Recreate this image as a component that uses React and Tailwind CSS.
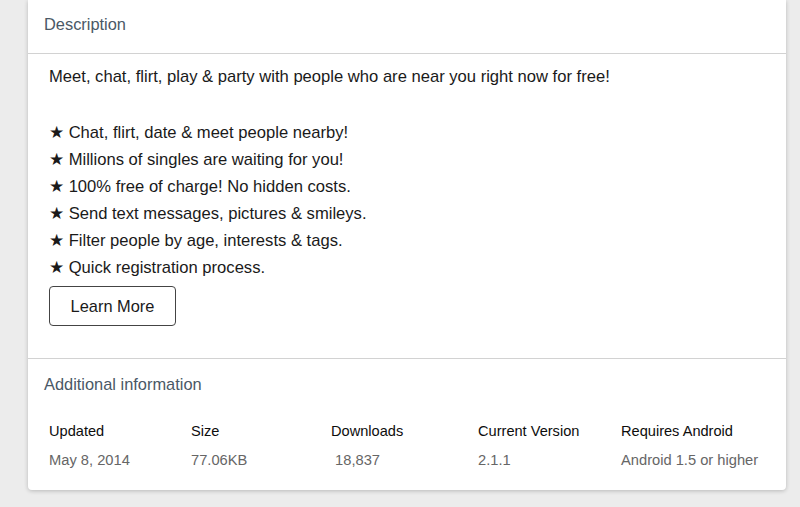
const BULLETS = [
  "Chat, flirt, date & meet people nearby!",
  "Millions of singles are waiting for you!",
  "100% free of charge! No hidden costs.",
  "Send text messages, pictures & smileys.",
  "Filter people by age, interests & tags.",
  "Quick registration process.",
];

const INFO = [
  { label: "Updated", value: "May 8, 2014" },
  { label: "Size", value: "77.06KB" },
  { label: "Downloads", value: "\u00a018,837" },
  { label: "Current Version", value: "2.1.1" },
  { label: "Requires Android", value: "Android 1.5 or higher" },
];

export default function App() {
  return (
    <div
      className="h-[507px] w-[800px] overflow-hidden bg-[#ececec] pl-[28px] pr-[14px]"
      style={{ fontFamily: '"Liberation Sans", Arial, sans-serif' }}
    >
      <div className="rounded-b-[4px] bg-white shadow-[0_1px_4px_rgba(0,0,0,0.22)]">
        {/* description */}
        <div className="flex h-[54px] items-center border-b border-[#d2d2d2] px-[16px] pb-[4px]">
          <h2 className="text-[16.4px] text-[#4a5866]">Description</h2>
        </div>
        <div className="px-[21px] pt-[9px] pb-[32px] text-[16.6px] leading-[27px] text-[#1a1a1a]">
          <p>Meet, chat, flirt, play &amp; party with people who are near you right now for free!</p>
          <ul className="mt-[29px]">
            {BULLETS.map((b) => (
              <li key={b}>★ {b}</li>
            ))}
          </ul>
          <button className="mt-[5px] h-[40px] w-[127px] rounded-[4px] border border-[#444] text-[16.4px] text-[#1a1a1a]">
            Learn More
          </button>
        </div>

        {/* additional info */}
        <div className="border-t border-[#d2d2d2] px-[16px] pt-[15px] pb-[21px]">
          <h2 className="text-[16.4px] leading-[20px] text-[#4a5866]">Additional information</h2>
          <div className="mt-[28px] grid grid-cols-[142px_140px_147px_143px_1fr] pl-[5px]">
            {INFO.map((i) => (
              <div key={i.label}>
                <p className="text-[14.6px] leading-[18px] text-[#0d0d0d]">{i.label}</p>
                <p className="mt-[11px] text-[14.7px] leading-[18px] text-[#666]">{i.value}</p>
              </div>
            ))}
          </div>
        </div>
      </div>
    </div>
  );
}
